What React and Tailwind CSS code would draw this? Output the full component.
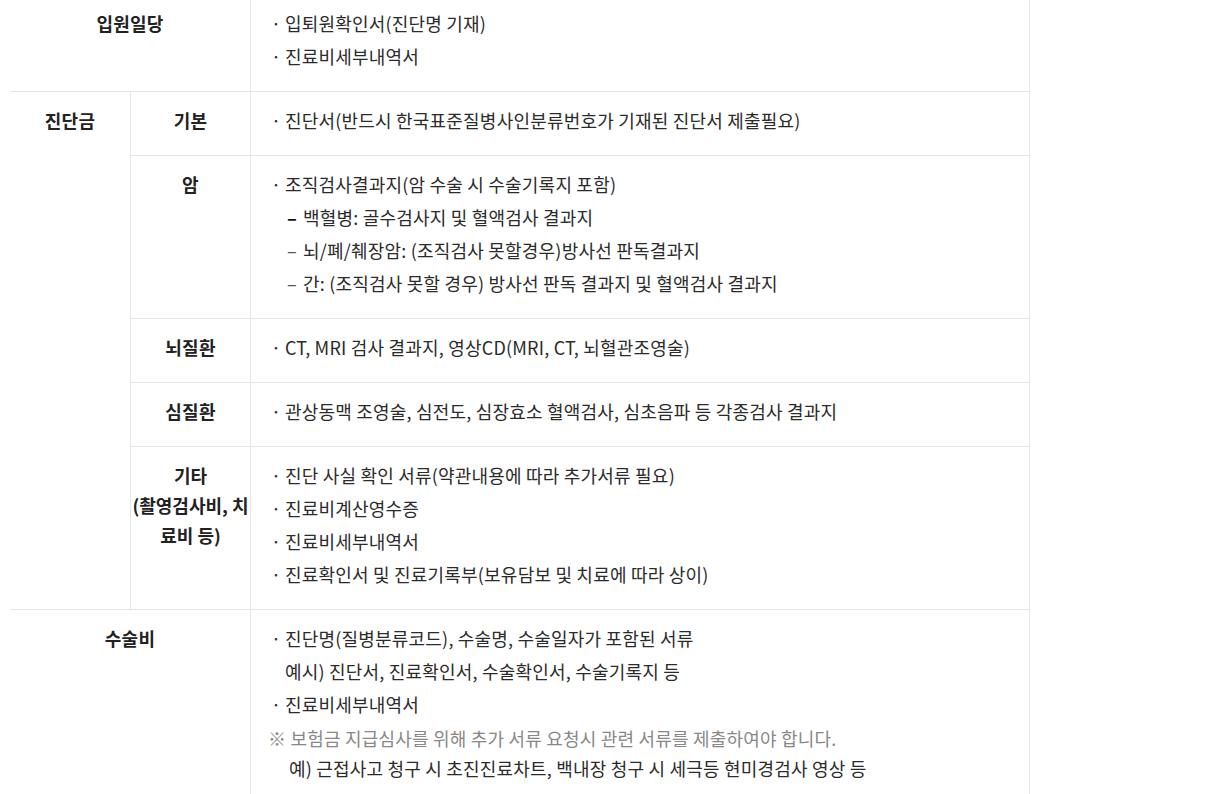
import React from "react";

// row label cell (bold, centered)
function Label({ children, className = "" }) {
    return (
        <div className={`pt-[13px] pb-[18px] text-center font-bold leading-[30px] text-[#222] border-b border-[#e5e5e5] ${className}`}>
            {children}
        </div>
    );
}

function Dot({ children }) {
    return (
        <div className="flex">
            <span className="w-[11px] shrink-0 -translate-x-[3px]">·</span>
            <span>{children}</span>
        </div>
    );
}

function Dash({ children, bold }) {
    return (
        <div className="flex pl-[13px]">
            <span className={`w-[16px] shrink-0 ${bold ? "font-bold text-[#111]" : "text-[#555]"}`}>–</span>
            <span>{children}</span>
        </div>
    );
}

function Content({ children }) {
    return (
        <div className="pt-[12px] pb-[18px] pl-[23px] leading-[33px] text-[#2b2b2b] border-l border-r border-b border-[#e5e5e5]">
            {children}
        </div>
    );
}

export default function App() {
    return (
        <div
            className="min-h-screen bg-white overflow-hidden"
            style={{ fontFamily: '"Noto Sans CJK KR", "Noto Sans", sans-serif' }}
        >
            <div className="ml-[10px] -mt-[5px] w-[1020px] grid grid-cols-[120px_120px_780px] text-[18px] tracking-[0.2px]">
                {/* 입원일당 */}
                <Label className="col-span-2">입원일당</Label>
                <Content>
                    <Dot>입퇴원확인서(진단명 기재)</Dot>
                    <Dot>진료비세부내역서</Dot>
                </Content>

                {/* 진단금 */}
                <Label className="row-span-5">진단금</Label>
                <Label className="border-l">기본</Label>
                <Content>
                    <Dot>진단서(반드시 한국표준질병사인분류번호가 기재된 진단서 제출필요)</Dot>
                </Content>

                <Label className="border-l">암</Label>
                <Content>
                    <Dot>조직검사결과지(암 수술 시 수술기록지 포함)</Dot>
                    <Dash bold>백혈병: 골수검사지 및 혈액검사 결과지</Dash>
                    <Dash>뇌/폐/췌장암: (조직검사 못할경우)방사선 판독결과지</Dash>
                    <Dash>간: (조직검사 못할 경우) 방사선 판독 결과지 및 혈액검사 결과지</Dash>
                </Content>

                <Label className="border-l">뇌질환</Label>
                <Content>
                    <Dot>CT, MRI 검사 결과지, 영상CD(MRI, CT, 뇌혈관조영술)</Dot>
                </Content>

                <Label className="border-l">심질환</Label>
                <Content>
                    <Dot>관상동맥 조영술, 심전도, 심장효소 혈액검사, 심초음파 등 각종검사 결과지</Dot>
                </Content>

                <Label className="border-l whitespace-nowrap tracking-normal">
                    기타
                    <br />
                    (촬영검사비, 치
                    <br />
                    료비 등)
                </Label>
                <Content>
                    <Dot>진단 사실 확인 서류(약관내용에 따라 추가서류 필요)</Dot>
                    <Dot>진료비계산영수증</Dot>
                    <Dot>진료비세부내역서</Dot>
                    <Dot>진료확인서 및 진료기록부(보유담보 및 치료에 따라 상이)</Dot>
                </Content>

                {/* 수술비 */}
                <Label className="col-span-2">수술비</Label>
                <Content>
                    <Dot>진단명(질병분류코드), 수술명, 수술일자가 포함된 서류</Dot>
                    <div className="pl-[11px]">예시) 진단서, 진료확인서, 수술확인서, 수술기록지 등</div>
                    <Dot>진료비세부내역서</Dot>
                    <div className="-ml-[6px] leading-[30px] mt-[2px]">
                        <p className="text-[#888]">※ 보험금 지급심사를 위해 추가 서류 요청시 관련 서류를 제출하여야 합니다.</p>
                        <p className="pl-[21px]">예) 근접사고 청구 시 초진진료차트, 백내장 청구 시 세극등 현미경검사 영상 등</p>
                    </div>
                </Content>
            </div>
        </div>
    );
}
